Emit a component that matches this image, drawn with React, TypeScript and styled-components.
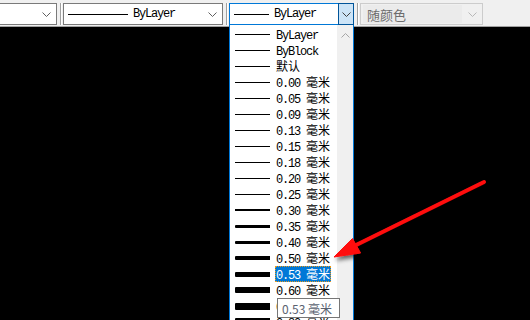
import React from "react";
import styled, { createGlobalStyle } from "styled-components";

const GlobalStyle = createGlobalStyle`
  html, body {
    margin: 0;
    padding: 0;
    background: #000;
    overflow: hidden;
  }
`;

type Weight = {
  label: string;
  unit?: string;
  px: number;
};

const weights: Weight[] = [
  { label: "ByLayer", px: 1 },
  { label: "ByBlock", px: 1 },
  { label: "默认", px: 1 },
  { label: "0.00", unit: "毫米", px: 1 },
  { label: "0.05", unit: "毫米", px: 1 },
  { label: "0.09", unit: "毫米", px: 1 },
  { label: "0.13", unit: "毫米", px: 1 },
  { label: "0.15", unit: "毫米", px: 1 },
  { label: "0.18", unit: "毫米", px: 1 },
  { label: "0.20", unit: "毫米", px: 1 },
  { label: "0.25", unit: "毫米", px: 1 },
  { label: "0.30", unit: "毫米", px: 2 },
  { label: "0.35", unit: "毫米", px: 3 },
  { label: "0.40", unit: "毫米", px: 3 },
  { label: "0.50", unit: "毫米", px: 4 },
  { label: "0.53", unit: "毫米", px: 5 },
  { label: "0.60", unit: "毫米", px: 6 },
  { label: "0.70", unit: "毫米", px: 7 },
  { label: "0.80", unit: "毫米", px: 8 },
];

const SELECTED = "0.53";

const Chevron = ({ up, color }: { up?: boolean; color: string }) => (
  <svg width="9" height="5" viewBox="0 0 9 5">
    <polyline
      points={up ? "0.5,4.5 4.5,0.5 8.5,4.5" : "0.5,0.5 4.5,4.5 8.5,0.5"}
      fill="none"
      stroke={color}
      strokeWidth="1"
    />
  </svg>
);

const Page = styled.div`
  position: relative;
  width: 530px;
  height: 320px;
  display: flex;
  flex-direction: column;
  overflow: hidden;
`;

const Toolbar = styled.div`
  height: 27px;
  box-sizing: border-box;
  background: #f0f0f0;
  border-bottom: 1px solid #a0a0a0;
  display: flex;
  align-items: flex-start;
  padding-top: 3px;
`;

const Canvas = styled.div`
  flex: 1;
  background: #000;
`;

const Combo = styled.div<{ $w: number; $focus?: boolean; $disabled?: boolean; $cut?: boolean }>`
  width: ${(p) => p.$w}px;
  height: 22px;
  box-sizing: border-box;
  border: 1px solid
    ${(p) => (p.$focus ? "#0078d7" : p.$disabled ? "#cccccc" : "#7a7a7a")};
  ${(p) => (p.$cut ? "border-left: none;" : "")}
  background: ${(p) => (p.$disabled ? "#f0f0f0" : "#fff")};
  display: flex;
  align-items: stretch;
`;

const ComboField = styled.div<{ $disabled?: boolean }>`
  flex: 1;
  display: flex;
  align-items: center;
  padding-left: 4px;
  margin: ${(p) => (p.$disabled ? "1px 0 1px 2px" : "0")};
  background: ${(p) => (p.$disabled ? "#ebebeb" : "transparent")};
  color: #6d6d6d;
  font-family: "Noto Sans CJK SC", sans-serif;
  font-size: 13px;
`;

const DropButton = styled.div<{ $active?: boolean }>`
  width: ${(p) => (p.$active ? 16 : 20)}px;
  display: flex;
  align-items: center;
  justify-content: center;
  box-sizing: border-box;
  background: ${(p) => (p.$active ? "#cce4f7" : "transparent")};
  border: ${(p) => (p.$active ? "1px solid #005499" : "none")};
  margin: ${(p) => (p.$active ? "-1px -1px -1px 0" : "0")};
  padding-top: 1px;
`;

const Grip = styled.div`
  width: 6px;
  height: 22px;
  display: flex;
  justify-content: center;
  &::before {
    content: "";
    width: 1px;
    height: 22px;
    background: #a0a0a0;
    box-shadow: 1px 0 0 #ffffff;
  }
`;

const Sample = styled.div<{ $w: number; $px: number }>`
  width: ${(p) => p.$w}px;
  height: ${(p) => p.$px}px;
  background: #000;
  flex-shrink: 0;
  border-radius: ${(p) => (p.$px > 2 ? "1px 0 0 1px" : "0")};
`;

const Mono = styled.span`
  font-family: "Liberation Mono", monospace;
  font-size: 12px;
  letter-spacing: -1.2px;
`;

const Cjk = styled.span`
  font-family: "Noto Sans CJK SC", sans-serif;
  font-size: 12px;
`;

const ComboValue = styled.div`
  display: flex;
  align-items: center;
  gap: 5px;
  padding-left: 4px;
  flex: 1;
  color: #000;
`;

const List = styled.div`
  position: absolute;
  left: 229px;
  top: 25px;
  width: 125px;
  height: 310px;
  box-sizing: border-box;
  border: 1px solid #0078d7;
  border-top: none;
  background: #fff;
  display: flex;
`;

const Items = styled.div`
  flex: 1;
  display: flex;
  flex-direction: column;
  padding-top: 1px;
`;

const Row = styled.div`
  height: 16px;
  display: flex;
  align-items: center;
  padding-left: 5px;
  gap: 5px;
`;

const Label = styled.div<{ $selected?: boolean }>`
  height: 16px;
  line-height: 16px;
  padding: 0 1px;
  white-space: pre;
  color: ${(p) => (p.$selected ? "#fff" : "#000")};
  background: ${(p) => (p.$selected ? "#0078d7" : "transparent")};
  outline: ${(p) => (p.$selected ? "1px dotted #e89a1e" : "none")};
  outline-offset: -1px;
  span {
    vertical-align: baseline;
    line-height: 16px;
  }
`;

const Scrollbar = styled.div`
  width: 16px;
  background: #f0f0f0;
  display: flex;
  justify-content: center;
  padding-top: 8px;
  box-sizing: border-box;
`;

const Tooltip = styled.div`
  position: absolute;
  left: 277px;
  top: 298px;
  width: 63px;
  height: 20px;
  box-sizing: border-box;
  border: 1px solid #767676;
  background: #ffffff;
  color: #5a6270;
  font-family: "Noto Sans CJK SC", sans-serif;
  font-size: 12px;
  display: flex;
  align-items: center;
  padding-left: 4px;
  white-space: pre;
`;

const Overlay = styled.svg`
  position: absolute;
  left: 0;
  top: 0;
  pointer-events: none;
`;

const WeightText = ({ w }: { w: Weight }) =>
  w.unit ? (
    <>
      <Mono>{w.label} </Mono>
      <Cjk>{w.unit}</Cjk>
    </>
  ) : /[A-Za-z]/.test(w.label) ? (
    <Mono>{w.label}</Mono>
  ) : (
    <Cjk>{w.label}</Cjk>
  );

export default function App() {
  return (
    <Page>
      <GlobalStyle />
      <Toolbar>
        <Combo $w={57} $cut>
          <ComboValue />
          <DropButton>
            <Chevron color="#606060" />
          </DropButton>
        </Combo>
        <Grip />
        <Combo $w={160}>
          <ComboValue>
            <Sample $w={60} $px={1} />
            <Mono>ByLayer</Mono>
          </ComboValue>
          <DropButton>
            <Chevron color="#606060" />
          </DropButton>
        </Combo>
        <Grip />
        <Combo $w={125} $focus>
          <ComboValue>
            <Sample $w={35} $px={1} />
            <Mono>ByLayer</Mono>
          </ComboValue>
          <DropButton $active>
            <Chevron color="#404040" />
          </DropButton>
        </Combo>
        <Grip />
        <Combo $w={123} $disabled>
          <ComboField $disabled>随颜色</ComboField>
          <DropButton>
            <Chevron color="#b8b8b8" />
          </DropButton>
        </Combo>
      </Toolbar>
      <Canvas />

      <List>
        <Items>
          {weights.map((w) => (
            <Row key={w.label}>
              <Sample $w={35} $px={w.px} />
              <Label $selected={w.label === SELECTED}>
                <WeightText w={w} />
              </Label>
            </Row>
          ))}
        </Items>
        <Scrollbar>
          <Chevron up color="#a6a6a6" />
        </Scrollbar>
      </List>

      <Tooltip>
        0.53 毫米
      </Tooltip>

      <Overlay width="530" height="320" viewBox="0 0 530 320">
        <defs>
          <filter id="shadow" x="-20%" y="-20%" width="140%" height="140%">
            <feDropShadow dx="2" dy="3" stdDeviation="2" floodColor="#000" floodOpacity="0.6" />
          </filter>
        </defs>
        <g filter="url(#shadow)" fill="#ff0f0f" stroke="#ff0f0f">
          <line x1="484" y1="182" x2="352" y2="247" strokeWidth="4" strokeLinecap="round" />
          <polygon points="334,257 352.5,238.5 360.5,253" strokeWidth="1" strokeLinejoin="round" />
        </g>
      </Overlay>
    </Page>
  );
}
